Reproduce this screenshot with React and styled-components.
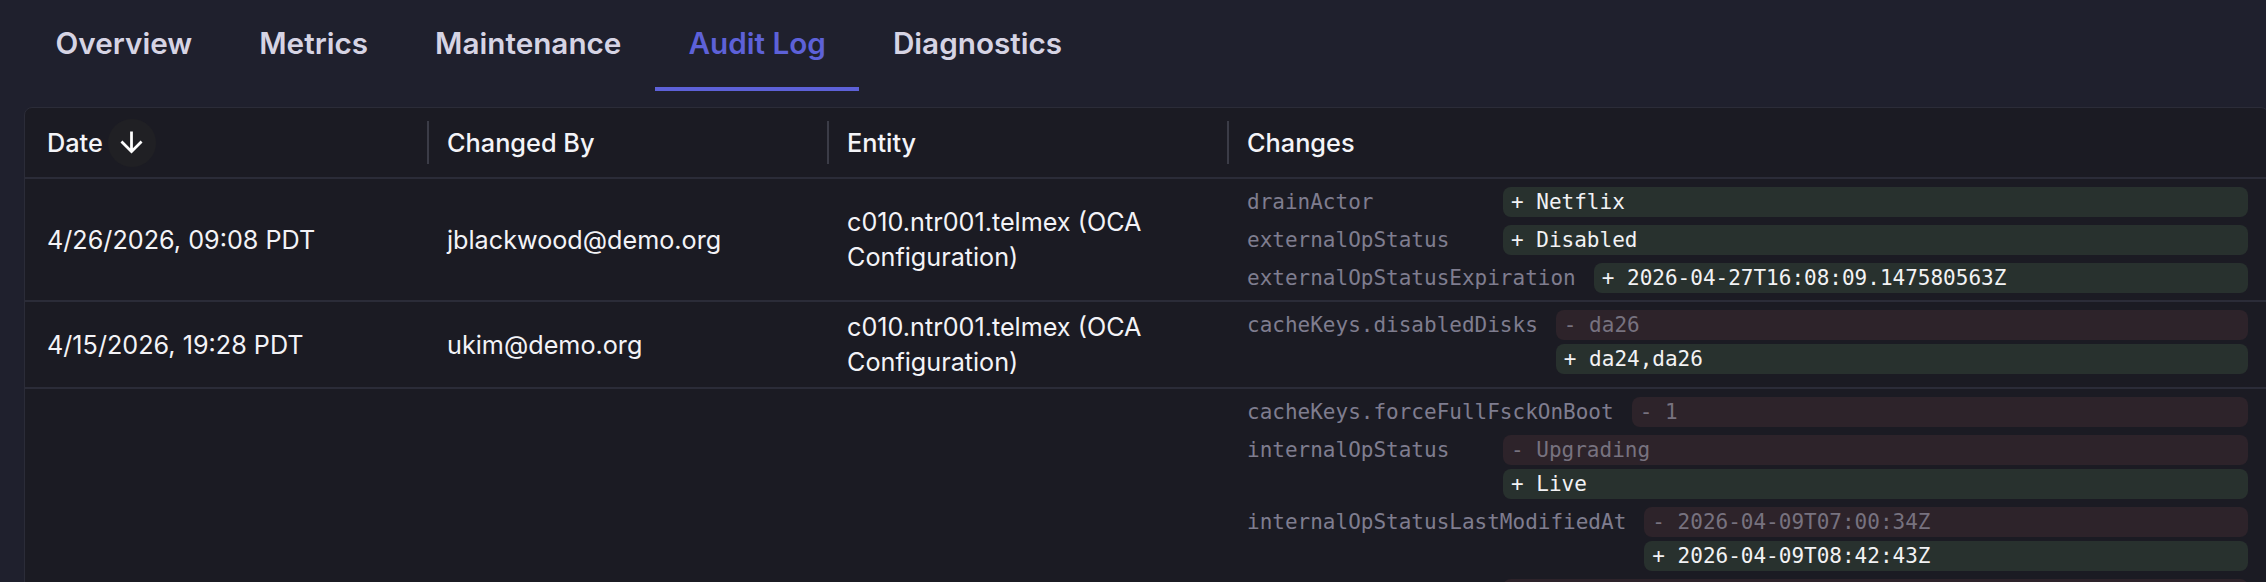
import React from 'react'
import styled, { createGlobalStyle } from 'styled-components'

const GlobalStyle = createGlobalStyle`
  html, body {
    margin: 0;
    background: #1f202d;
    overflow: hidden;
  }
  body {
    font-family: Inter, "Noto Sans", sans-serif;
    color: #f1f1f5;
  }
`

const Page = styled.div`
  padding-left: 24px;
`

const Tabs = styled.nav`
  display: flex;
  margin-left: -2px;
  margin-bottom: 16px;
`

const Tab = styled.div`
  padding: 26px 33.5px 27px;
  font-size: 29.7px;
  line-height: 34px;
  font-weight: 600;
  color: ${p => (p.$active ? '#5d61d8' : '#d6d4e4')};
  border-bottom: 4px solid ${p => (p.$active ? '#5d61d8' : 'transparent')};
`

const Table = styled.div`
  width: 2243px;
  background: #1b1b23;
  border: 1px solid #2b2c38;
  border-radius: 8px 8px 0 0;
`

const HeadRow = styled.div`
  display: grid;
  grid-template-columns: 402px 400px 400px 1fr;
  height: 69px;
  border-bottom: 2px solid #2b2c38;
`

const HeadCell = styled.div`
  display: flex;
  align-items: center;
  font-size: 25.3px;
  font-weight: 500;
  color: #f4f4f8;
  &:first-child {
    padding-left: 22px;
  }
`

const Separator = styled.span`
  width: 2px;
  height: 43px;
  background: #3b3c47;
  margin-right: 18px;
`

const SortButton = styled.span`
  display: flex;
  align-items: center;
  justify-content: center;
  width: 48px;
  height: 48px;
  margin-left: 5px;
  border-radius: 50%;
  background: #202024;
`

const Row = styled.div`
  display: grid;
  grid-template-columns: 402px 400px 400px 1fr;
  align-items: center;
  border-bottom: 2px solid #2b2c38;
`

const Cell = styled.div`
  padding: 8px 20px 7px;
  font-size: 25.2px;
  line-height: 35px;
  color: #f3f3f7;
  &:first-child {
    padding-left: 22px;
  }
`

const Changes = styled.div`
  display: flex;
  flex-direction: column;
  gap: 8px;
  padding: 8px 20px 7px;
  align-self: start;
`

const ChangeGroup = styled.div`
  display: flex;
  gap: 18px;
`

const Key = styled.span`
  flex-shrink: 0;
  min-width: 238px;
  font-family: "DejaVu Sans Mono", monospace;
  font-size: 21px;
  line-height: 30px;
  color: #7f7d8f;
`

const Values = styled.div`
  flex: 1;
  display: flex;
  flex-direction: column;
  gap: 4px;
`

const Pill = styled.div`
  padding: 0 8px;
  border-radius: 8px;
  font-family: "DejaVu Sans Mono", monospace;
  font-size: 21px;
  line-height: 30px;
  white-space: pre;
  background: ${p => (p.$kind === 'removed' ? '#2d232a' : '#28312e')};
  color: ${p => (p.$kind === 'removed' ? '#77727f' : '#f2f2f4')};
`

const SortArrow = () => (
  <svg width="33" height="33" viewBox="0 0 24 24" fill="#ffffff">
    <path d="M20 12l-1.41-1.41L13 16.17V4h-2v12.17l-5.58-5.59L4 12l8 8 8-8z" />
  </svg>
)

const tabs = ['Overview', 'Metrics', 'Maintenance', 'Audit Log', 'Diagnostics']

const rows = [
  {
    date: '4/26/2026, 09:08 PDT',
    user: 'jblackwood@demo.org',
    entity: 'c010.ntr001.telmex (OCA Configuration)',
    changes: [
      { key: 'drainActor', added: 'Netflix' },
      { key: 'externalOpStatus', added: 'Disabled' },
      { key: 'externalOpStatusExpiration', added: '2026-04-27T16:08:09.147580563Z' },
    ],
  },
  {
    date: '4/15/2026, 19:28 PDT',
    user: 'ukim@demo.org',
    entity: 'c010.ntr001.telmex (OCA Configuration)',
    changes: [
      { key: 'cacheKeys.disabledDisks', removed: 'da26', added: 'da24,da26' },
    ],
  },
  {
    date: '4/9/2026, 01:42 PDT',
    user: 'system@demo.org',
    entity: 'c010.ntr001.telmex (OCA Configuration)',
    changes: [
      { key: 'cacheKeys.forceFullFsckOnBoot', removed: '1' },
      { key: 'internalOpStatus', removed: 'Upgrading', added: 'Live' },
      { key: 'internalOpStatusLastModifiedAt', removed: '2026-04-09T07:00:34Z', added: '2026-04-09T08:42:43Z' },
      { key: 'lifecycleState', removed: 'Maintenance', added: 'Active' },
      { key: 'softwareVersion', removed: '24.3.1', added: '24.4.0' },
      { key: 'upgradeTarget', removed: '24.4.0' },
      { key: 'upgradeStartedAt', removed: '2026-04-09T06:58:12Z' },
      { key: 'lastRebootAt', added: '2026-04-09T07:31:05Z' },
    ],
  },
]

const App = () => (
  <Page>
    <GlobalStyle />
    <Tabs>
      {tabs.map(t => (
        <Tab key={t} $active={t === 'Audit Log'}>{t}</Tab>
      ))}
    </Tabs>
    <Table>
      <HeadRow>
        <HeadCell>
          Date
          <SortButton><SortArrow /></SortButton>
        </HeadCell>
        <HeadCell><Separator />Changed By</HeadCell>
        <HeadCell><Separator />Entity</HeadCell>
        <HeadCell><Separator />Changes</HeadCell>
      </HeadRow>
      {rows.map((r, i) => (
        <Row key={i}>
          <Cell>{r.date}</Cell>
          <Cell>{r.user}</Cell>
          <Cell>{r.entity}</Cell>
          <Changes>
            {r.changes.map(c => (
              <ChangeGroup key={c.key}>
                <Key>{c.key}</Key>
                <Values>
                  {c.removed && <Pill $kind="removed">- {c.removed}</Pill>}
                  {c.added && <Pill $kind="added">+ {c.added}</Pill>}
                </Values>
              </ChangeGroup>
            ))}
          </Changes>
        </Row>
      ))}
    </Table>
  </Page>
)

export default App
